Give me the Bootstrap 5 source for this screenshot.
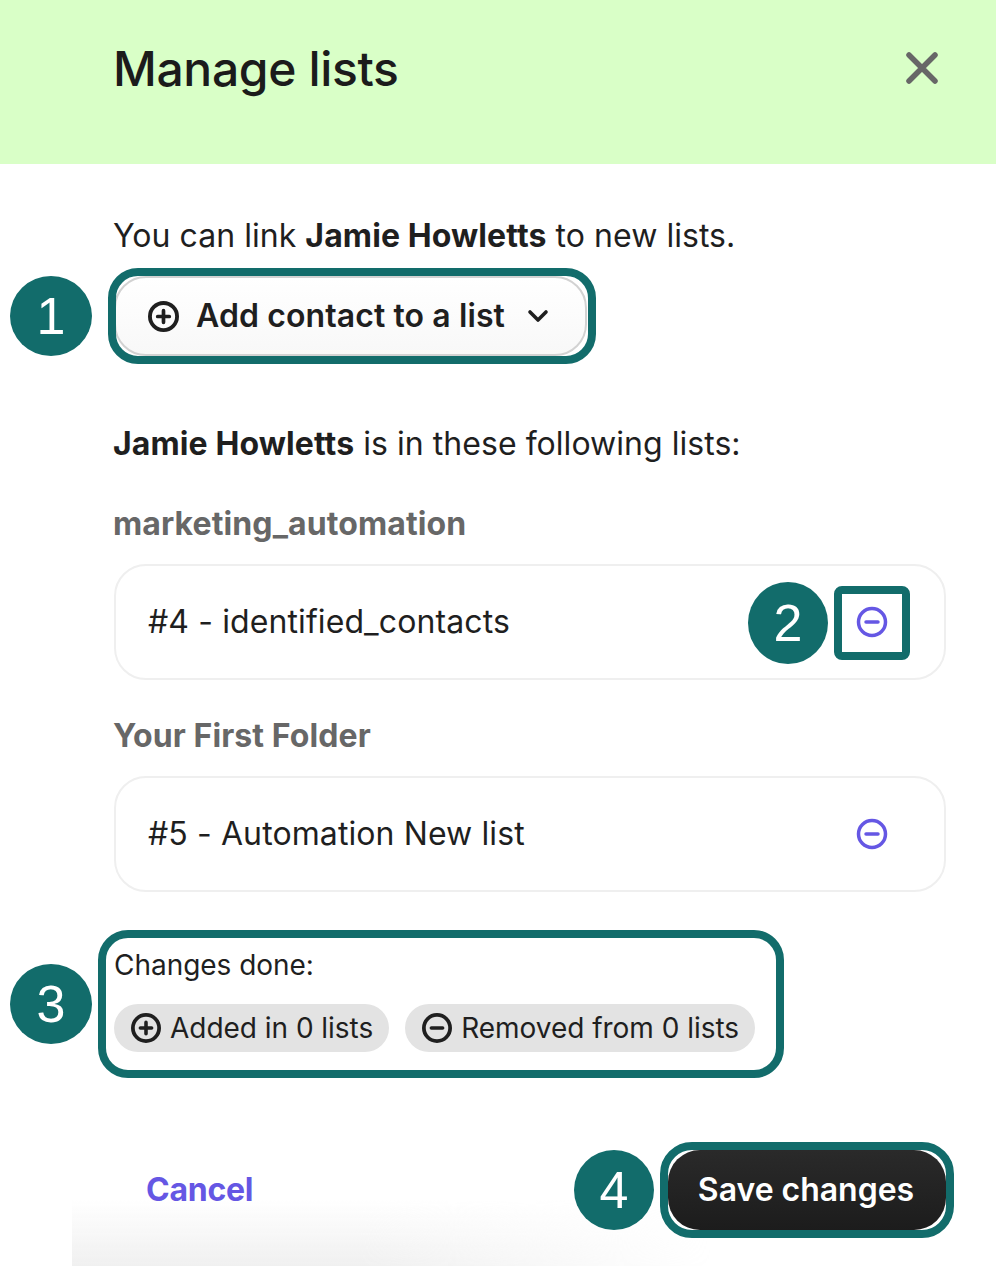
<!DOCTYPE html>
<html lang="en">
<head>
<meta charset="utf-8">
<title>Manage lists</title>
<link rel="stylesheet" href="https://cdn.jsdelivr.net/npm/bootstrap@5.3.0/dist/css/bootstrap.min.css">
<style>
html,body{margin:0;background:#fff;}
body{font-family:Inter,"Liberation Sans",sans-serif;color:#1f1f1f;}
.shot{position:relative;width:996px;height:1266px;overflow:hidden;background:#fff;}
.head-band{height:164px;background:#d9ffc7;padding:0 58px 28px 114px;}
.head-title{font-size:48px;font-weight:500;letter-spacing:-.35px;line-height:1;color:#1b1b1b;margin:0 0 -2px -1px;}
.main-area{padding:53px 50px 0 114px;}
.txt-line{font-size:32px;line-height:38px;margin:0 0 0 -1px;letter-spacing:.04px;}
.txt-line b{font-weight:700;letter-spacing:.1px;}
.add-btn{height:80px;width:473px;margin-top:21px;border:2px solid #d2d2d2;border-radius:32px;background:linear-gradient(#fff,#f8f8f8);font-size:32px;font-weight:600;color:#1f1f1f;padding:0 36px 0 32px;letter-spacing:.1px;}
.add-ico{margin-right:17px;flex:none;}
.sec-lead{margin-top:69px;}
.folder-name{font-size:32px;font-weight:700;color:#676767;line-height:38px;margin:42px 0 21px -1px;letter-spacing:.1px;}
.folder-name.tight{margin-top:37px;}
.list-box{height:116px;border:2px solid #efefef;border-radius:32px;padding:0 56px 0 32px;font-size:32px;letter-spacing:.1px;}
.changes-zone{margin-top:55px;}
.changes-label{font-size:28px;line-height:36px;margin:0 0 21px;letter-spacing:-.03px;}
.chip-pill{height:48px;border-radius:24px;background:#e3e3e3;font-size:28px;padding:0 16px 0 17px;gap:9px;letter-spacing:-.03px;}
.foot-row{position:absolute;left:114px;right:50px;top:1150px;height:80px;}
.cancel-link{font-size:32px;font-weight:700;color:#6557e4;text-decoration:none;padding-left:32px;letter-spacing:-.25px;}
.save-btn{width:278px;height:80px;border:0;border-radius:32px;background:linear-gradient(#2a2a2a,#1c1c1c);color:#fff;font-size:32px;font-weight:600;letter-spacing:-.02px;padding:0 2px 0 0;}
.foot-fade{position:absolute;left:72px;top:1200px;width:640px;height:66px;background:linear-gradient(to bottom,rgba(240,240,240,0),#f0f0f0);-webkit-mask-image:linear-gradient(to right,#000 45%,transparent);mask-image:linear-gradient(to right,#000 45%,transparent);}
.num-dot{position:absolute;height:80px;width:80px;border-radius:50%;background:#126c6b;color:#fff;font-family:"Liberation Sans",sans-serif;font-size:52px;line-height:80px;text-align:center;z-index:3;}
.dot-one{left:10px;top:276px;width:82px;}
.dot-two{left:748px;top:582px;height:82px;line-height:82px;}
.dot-three{left:10px;top:964px;width:82px;}
.dot-four{left:574px;top:1150px;}
.hl-frame{position:absolute;border:8px solid #126c6b;z-index:2;pointer-events:none;}
.hl-one{left:108px;top:268px;width:488px;height:96px;border-radius:30px;}
.hl-two{left:834px;top:586px;width:76px;height:74px;border-radius:8px;}
.hl-three{left:98px;top:930px;width:686px;height:148px;border-radius:30px;}
.hl-four{left:660px;top:1142px;width:294px;height:96px;border-radius:32px;}
.ico-round{flex:none;display:block;}
</style>
</head>
<body>
<div class="shot">
  <div class="head-band d-flex justify-content-between align-items-center">
    <h1 class="head-title">Manage lists</h1>
    <svg width="32" height="32" viewBox="0 0 32 32" aria-label="Close"><path d="M3 3 29 29M29 3 3 29" fill="none" stroke="#676767" stroke-width="5.5" stroke-linecap="round"/></svg>
  </div>
  <div class="main-area">
    <p class="txt-line">You can link <b>Jamie Howletts</b> to new lists.</p>
    <button type="button" class="add-btn d-flex align-items-center">
      <svg class="add-ico" width="31" height="31" viewBox="0 0 32 32"><circle cx="16" cy="16" r="14" fill="none" stroke="#1f1f1f" stroke-width="4"/><path d="M16 10v12M10 16h12" stroke="#1f1f1f" stroke-width="3.8" stroke-linecap="round"/></svg>
      <span>Add contact to a list</span>
      <svg class="ms-auto" width="22" height="14" viewBox="0 0 22 14"><path d="M3 3l8 8 8-8" fill="none" stroke="#1f1f1f" stroke-width="3.6" stroke-linecap="round" stroke-linejoin="round"/></svg>
    </button>
    <p class="txt-line sec-lead"><b>Jamie Howletts</b> is in these following lists:</p>
    <div class="folder-name">marketing_automation</div>
    <div class="list-box d-flex align-items-center justify-content-between">
      <span>#4 - identified_contacts</span>
      <svg width="32" height="32" viewBox="0 0 32 32"><circle cx="16" cy="16" r="13.5" fill="none" stroke="#6557e4" stroke-width="3.5"/><path d="M10 16h12" stroke="#6557e4" stroke-width="3.5" stroke-linecap="round"/></svg>
    </div>
    <div class="folder-name tight">Your First Folder</div>
    <div class="list-box d-flex align-items-center justify-content-between">
      <span>#5 - Automation New list</span>
      <svg width="32" height="32" viewBox="0 0 32 32"><circle cx="16" cy="16" r="13.5" fill="none" stroke="#6557e4" stroke-width="3.5"/><path d="M10 16h12" stroke="#6557e4" stroke-width="3.5" stroke-linecap="round"/></svg>
    </div>
    <div class="changes-zone">
      <p class="changes-label">Changes done:</p>
      <div class="d-flex gap-3">
        <span class="chip-pill d-inline-flex align-items-center">
          <svg class="ico-round" width="30" height="30" viewBox="0 0 32 32"><circle cx="16" cy="16" r="14" fill="none" stroke="#1f1f1f" stroke-width="4"/><path d="M16 10v12M10 16h12" stroke="#1f1f1f" stroke-width="3.8" stroke-linecap="round"/></svg>
          Added in 0 lists
        </span>
        <span class="chip-pill d-inline-flex align-items-center">
          <svg class="ico-round" width="30" height="30" viewBox="0 0 32 32"><circle cx="16" cy="16" r="14" fill="none" stroke="#1f1f1f" stroke-width="4"/><path d="M10 16h12" stroke="#1f1f1f" stroke-width="3.8" stroke-linecap="round"/></svg>
          Removed from 0 lists
        </span>
      </div>
    </div>
  </div>
  <div class="foot-fade"></div>
  <div class="foot-row d-flex justify-content-between align-items-center">
    <a href="#" class="cancel-link">Cancel</a>
    <button type="button" class="save-btn">Save changes</button>
  </div>
  <div class="hl-frame hl-one"></div>
  <div class="hl-frame hl-two"></div>
  <div class="hl-frame hl-three"></div>
  <div class="hl-frame hl-four"></div>
  <div class="num-dot dot-one">1</div>
  <div class="num-dot dot-two">2</div>
  <div class="num-dot dot-three">3</div>
  <div class="num-dot dot-four">4</div>
</div>
<script src="https://cdn.jsdelivr.net/npm/bootstrap@5.3.0/dist/js/bootstrap.bundle.min.js"></script>
</body>
</html>
